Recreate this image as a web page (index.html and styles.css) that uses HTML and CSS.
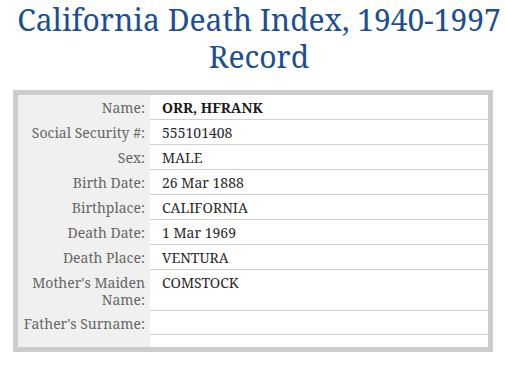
FILE: index.html
```html
<!DOCTYPE html>
<html>
<head>
<meta charset="utf-8">
<link rel="stylesheet" href="styles.css">
</head>
<body>
<h1 class="title">California Death Index, 1940-1997<br>Record</h1>
<div class="record">
  <table class="fields">
    <tr><th>Name:</th><td class="strong">ORR, HFRANK</td></tr>
    <tr><th>Social Security #:</th><td>555101408</td></tr>
    <tr><th>Sex:</th><td>MALE</td></tr>
    <tr><th>Birth Date:</th><td>26 Mar 1888</td></tr>
    <tr><th>Birthplace:</th><td>CALIFORNIA</td></tr>
    <tr><th>Death Date:</th><td>1 Mar 1969</td></tr>
    <tr><th>Death Place:</th><td>VENTURA</td></tr>
    <tr><th>Mother's Maiden Name:</th><td>COMSTOCK</td></tr>
    <tr><th>Father's Surname:</th><td></td></tr>
  </table>
</div>
</body>
</html>
```
FILE: styles.css
```css
html, body { margin: 0; padding: 0; background: #fff; }
body { padding: 0 12px 0 13px; }
.title {
  margin: 1px -19px 15px -7px;
  white-space: nowrap;
  font-family: "Noto Serif", "Liberation Serif", serif;
  font-weight: normal;
  font-size: 30px;
  line-height: 37px;
  color: #1b4f92;
  text-align: center;
}
.record {
  border: 5px solid #cccccc;
  padding-bottom: 12px;
  background: linear-gradient(to right, #f0f0f0 132px, #fff 132px);
}
.fields {
  width: 100%;
  border-collapse: collapse;
  font-family: "Noto Serif", "Liberation Serif", serif;
  font-size: 14px;
  line-height: 17px;
}
.fields th {
  width: 132px;
  box-sizing: border-box;
  text-align: right;
  font-weight: normal;
  color: #666;
  padding: 4px 5px 3px 0;
  vertical-align: top;
  background: #f0f0f0;
}
.fields td {
  color: #2a2a2a;
  padding: 4px 6px 3px 12px;
  vertical-align: top;
  border-bottom: 1px solid #cfcfcf;
  background: #fff;
}
.fields td.strong { font-weight: bold; color: #1a1a1a; }
```
